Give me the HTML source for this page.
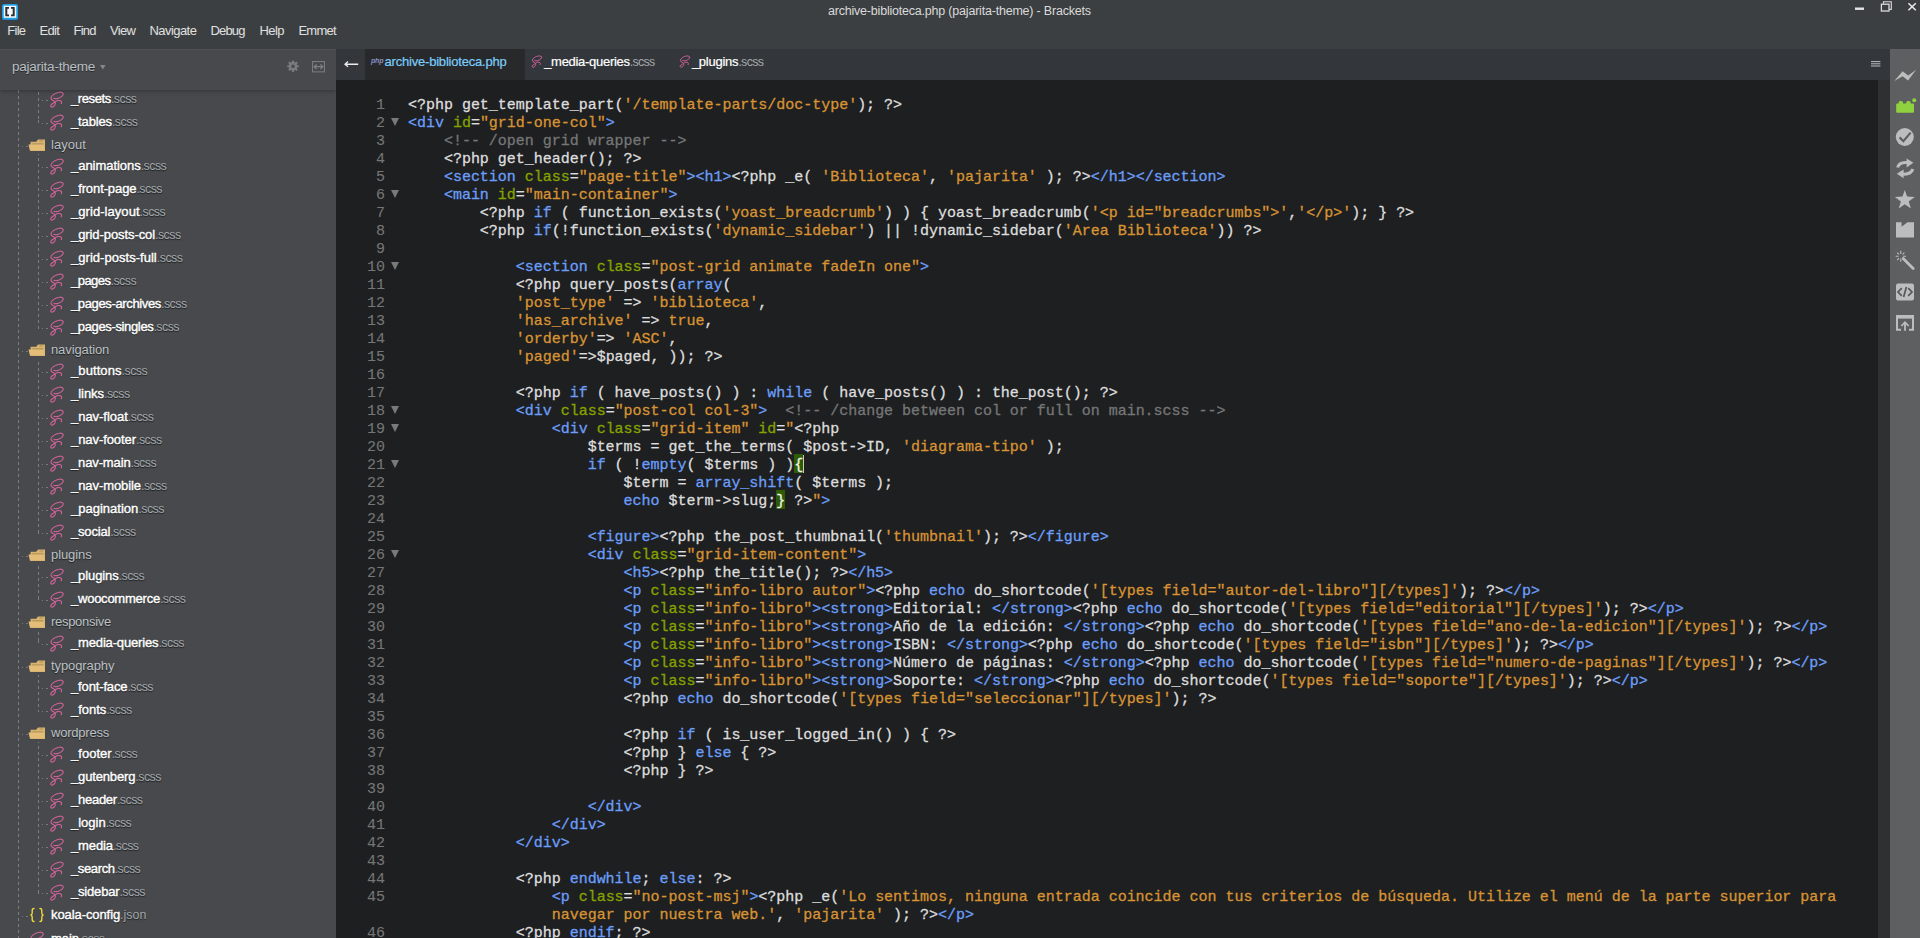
<!DOCTYPE html>
<html><head><meta charset="utf-8"><title>Brackets</title>
<style>
*{margin:0;padding:0;box-sizing:border-box}
html,body{width:1920px;height:938px;overflow:hidden;background:#3c3f41}
body{font-family:"Liberation Sans",sans-serif;position:relative;color:#ddd}
i{font-style:normal}
svg{display:block}
#top{position:absolute;left:0;top:0;width:1920px;height:49px;background:#3c3f41}
.ttl{position:absolute;top:3px;font-size:12.5px;color:#dadada;line-height:16px;white-space:nowrap}
#logo{position:absolute;left:2px;top:4px}
.mi{position:absolute;top:22px;font-size:13px;line-height:18px;color:#e0e0e0;white-space:nowrap}
.wc{position:absolute}
#side{position:absolute;left:0;top:49px;width:336px;height:889px;background:#47494c;overflow:hidden}
#tree{position:absolute;left:0;top:-49px;width:336px;height:938px}
#shead{position:absolute;left:0;top:0;width:336px;height:41px;background:#47494c;z-index:3;box-shadow:inset 0 1px 0 #505255,0 1px 4px rgba(0,0,0,.3)}
.pn{position:absolute;top:9px;font-size:13.5px;line-height:18px;color:#b8bec2;text-shadow:0 1px 0 rgba(0,0,0,.45);white-space:nowrap}
.tx{position:absolute;font-size:13px;line-height:20px;white-space:nowrap;text-shadow:0 1px 1px rgba(0,0,0,.6)}
.fn{color:#fff;-webkit-text-stroke:.4px #fff}.ex{color:#a3a8ac;-webkit-text-stroke:0;font-size:12.4px}.dn{color:#bcc1c5}
.ti{position:absolute;line-height:0}
.hd{position:absolute;width:7px;height:1px;background:linear-gradient(90deg,#76787b 0 1px,transparent 1px 4px,#76787b 4px 6px,transparent 6px)}
.hd2{position:absolute;width:6px;height:1px;background:linear-gradient(90deg,#76787b 0 1px,transparent 1px 4px,#76787b 4px 6px)}
.vd{position:absolute;width:1px;background:repeating-linear-gradient(180deg,#7b7d80 0 3px,transparent 3px 6px)}
#tabs{position:absolute;left:336px;top:49px;width:1554px;height:31px;background:#33373b}
#tabs .act{position:absolute;left:29px;top:0;width:160px;height:31px;background:#28292b}
.tb{position:absolute;top:3.5px;font-size:13px;line-height:18px;white-space:nowrap;color:#fff;-webkit-text-stroke:.2px #fff}
.tb.a{color:#7ccdfa;-webkit-text-stroke:.2px #7ccdfa}
.tic{position:absolute}
#ed{position:absolute;left:336px;top:80px;width:1554px;height:858px;background:#1d1f21;overflow:hidden}
#code{position:absolute;left:-336px;top:-80px;width:1920px;height:938px}
#sbar{position:absolute;left:1878px;top:80px;width:12px;height:858px;background:#2f3030}
#tool{position:absolute;left:1890px;top:49px;width:30px;height:889px;background:#5d5f60}

.ln{position:absolute;z-index:0;left:336px;height:18px;width:1540px;font-family:"Liberation Mono",monospace;font-size:15px;line-height:18px;white-space:pre;color:#ddd;-webkit-text-stroke:.3px}
.no{position:absolute;left:0;width:49px;text-align:right;color:#767676;-webkit-text-stroke:.1px}
.cd{position:absolute;left:72px;letter-spacing:-.019px}
.f{position:absolute;left:55px;top:3px;width:0;height:0;border-left:4px solid transparent;border-right:4px solid transparent;border-top:8px solid #7a7a7a}
.t,.k{color:#6c9ef8}.a{color:#85a300}.s{color:#d89333}.c{color:#767676}.m{color:#f2f2f2;position:relative}.m::before{content:"";position:absolute;left:0;top:-3px;width:9px;height:19px;background:#2e5c00;z-index:-1}.cur{position:absolute;top:-2px;width:1px;height:18px;background:#c8c8c8}
</style></head><body>
<div id="top">
<svg id="logo" width="16" height="16" viewBox="0 0 16 16"><rect x="0" y="0" width="16" height="16" rx="2" fill="#1b8fd2"/><rect x="0.4" y="0.4" width="15.2" height="14.4" rx="1.6" fill="#2ba8e8"/><rect x="1.8" y="1.8" width="12.4" height="12" rx="0.6" fill="#f4f8fb"/><path d="M3.3 3h3.7v1.8H5.3v5.6h1.7v1.8H3.3zM12.7 3H9v1.8h1.7v5.6H9v1.8h3.7z" fill="#2a2e32"/></svg>

<div id="ttl" class="ttl" style="left:828px;letter-spacing:-0.205px">archive-biblioteca.php (pajarita-theme) - Brackets</div>
<div id="m0" class="mi" style="left:7.3px;letter-spacing:-0.738px">File</div>
<div id="m1" class="mi" style="left:39.4px;letter-spacing:-0.652px">Edit</div>
<div id="m2" class="mi" style="left:73.5px;letter-spacing:-0.774px">Find</div>
<div id="m3" class="mi" style="left:109.9px;letter-spacing:-0.638px">View</div>
<div id="m4" class="mi" style="left:149.5px;letter-spacing:-0.564px">Navigate</div>
<div id="m5" class="mi" style="left:210.5px;letter-spacing:-0.842px">Debug</div>
<div id="m6" class="mi" style="left:259.6px;letter-spacing:-0.638px">Help</div>
<div id="m7" class="mi" style="left:298.4px;letter-spacing:-0.714px">Emmet</div>
<svg class="wc" style="left:1850px;top:0" width="70" height="16" viewBox="0 0 70 16"><rect x="5" y="7.5" width="9" height="2.4" fill="#e6e6e6"/><path d="M33.5 3.8v-2h7.8v7.6h-2" fill="none" stroke="#dcdcdc" stroke-width="1.1"/><rect x="31.4" y="4.2" width="7.6" height="6.8" fill="none" stroke="#dcdcdc" stroke-width="1.3"/><path d="M58.4 3.2l7.4 7M65.8 3.2l-7.4 7" stroke="#ececec" stroke-width="1.5" fill="none"/></svg>

</div>
<div id="side">
  <div id="shead"><div id="pn" class="pn" style="left:12px;letter-spacing:-0.235px">pajarita-theme</div><svg style="position:absolute;left:100px;top:16.2px" width="6" height="5" viewBox="0 0 6 5"><path d="M0 0h5.6L2.8 4.4z" fill="#7f898d"/></svg>
<svg style="position:absolute;left:286.5px;top:11.4px" width="12" height="12.5" viewBox="0 0 13 13"><g fill="#787c7f"><circle cx="6.5" cy="6.5" r="4.6"/><rect x="5.3" y="0.2" width="2.4" height="12.6" rx=".5"/><rect x="5.3" y="0.2" width="2.4" height="12.6" rx=".5" transform="rotate(45 6.5 6.5)"/><rect x="5.3" y="0.2" width="2.4" height="12.6" rx=".5" transform="rotate(90 6.5 6.5)"/><rect x="5.3" y="0.2" width="2.4" height="12.6" rx=".5" transform="rotate(135 6.5 6.5)"/></g><circle cx="6.5" cy="6.5" r="1.8" fill="#47494c"/></svg>
<svg style="position:absolute;left:312px;top:12px" width="13" height="12" viewBox="0 0 13 12"><rect x=".55" y=".55" width="11.9" height="10.3" fill="none" stroke="#777b7e" stroke-width="1.1"/><path d="M2.6 5.7h7.8M4.6 3.4L2.2 5.7L4.6 8M8.4 3.4L10.8 5.7L8.4 8" fill="none" stroke="#7d8285" stroke-width="1.3"/></svg>
</div>
  <div id="tree">
<div class="hd" style="left:42px;top:100px"></div>
<div class="ti" style="left:49px;top:90.5px"><svg viewBox="0 0 16 18" width="15.5" height="17"><path d="M14.8 2.7C13.8 0.4 8.6 0.8 4.8 3.6C1.7 5.9 1 7.9 2.9 9.3C4.4 10.4 5.8 10.6 6.3 11.7C7.2 13.6 5.6 16.2 3.6 16.9C2 17.4 1.1 16.2 1.8 15C2.6 13.6 4.8 12.9 6.3 11.5C7.8 10.1 11 9.6 12.4 10.6C13.4 11.4 13.3 12.8 12.6 13.5M14.8 2.7C15.5 4.3 12.8 6.7 9.8 7.7C7.8 8.4 5.9 8.3 5 7.7" fill="none" stroke="#d0639b" stroke-width="1.15" stroke-linecap="round" stroke-linejoin="round"/></svg></div>
<div class="tx fn" style="left:71px;top:89px"><span id="t0n" style="letter-spacing:-0.392px">_resets</span><span id="t0e" class="ex" style="letter-spacing:-0.527px">.scss</span></div>
<div class="hd" style="left:42px;top:123px"></div>
<div class="ti" style="left:49px;top:113.5px"><svg viewBox="0 0 16 18" width="15.5" height="17"><path d="M14.8 2.7C13.8 0.4 8.6 0.8 4.8 3.6C1.7 5.9 1 7.9 2.9 9.3C4.4 10.4 5.8 10.6 6.3 11.7C7.2 13.6 5.6 16.2 3.6 16.9C2 17.4 1.1 16.2 1.8 15C2.6 13.6 4.8 12.9 6.3 11.5C7.8 10.1 11 9.6 12.4 10.6C13.4 11.4 13.3 12.8 12.6 13.5M14.8 2.7C15.5 4.3 12.8 6.7 9.8 7.7C7.8 8.4 5.9 8.3 5 7.7" fill="none" stroke="#d0639b" stroke-width="1.15" stroke-linecap="round" stroke-linejoin="round"/></svg></div>
<div class="tx fn" style="left:71px;top:112px"><span id="t1n" style="letter-spacing:-0.146px">_tables</span><span id="t1e" class="ex" style="letter-spacing:-0.527px">.scss</span></div>
<div class="hd2" style="left:22px;top:146px"></div>
<div class="ti" style="left:28px;top:138.5px"><svg viewBox="0 0 18 14" width="18" height="14"><path d="M2.6 2.8h5.6l1.8-2.4h7v11.4H2.6z" fill="#d9b46f"/><path d="M11.4 1.5h3.8v0.9h-3.8z" fill="#a98c58"/><path d="M4.2 4.6h11.2v0.9H4.2z" fill="#90794b"/><path d="M0.5 5.5h15l1.5 6.3H2z" fill="#e4be78"/></svg></div>
<div id="t2" class="tx dn" style="left:51px;top:135px;letter-spacing:0.049px">layout</div>
<div class="hd" style="left:42px;top:167px"></div>
<div class="ti" style="left:49px;top:157.5px"><svg viewBox="0 0 16 18" width="15.5" height="17"><path d="M14.8 2.7C13.8 0.4 8.6 0.8 4.8 3.6C1.7 5.9 1 7.9 2.9 9.3C4.4 10.4 5.8 10.6 6.3 11.7C7.2 13.6 5.6 16.2 3.6 16.9C2 17.4 1.1 16.2 1.8 15C2.6 13.6 4.8 12.9 6.3 11.5C7.8 10.1 11 9.6 12.4 10.6C13.4 11.4 13.3 12.8 12.6 13.5M14.8 2.7C15.5 4.3 12.8 6.7 9.8 7.7C7.8 8.4 5.9 8.3 5 7.7" fill="none" stroke="#d0639b" stroke-width="1.15" stroke-linecap="round" stroke-linejoin="round"/></svg></div>
<div class="tx fn" style="left:71px;top:156px"><span id="t3n" style="letter-spacing:-0.042px">_animations</span><span id="t3e" class="ex" style="letter-spacing:-0.527px">.scss</span></div>
<div class="hd" style="left:42px;top:190px"></div>
<div class="ti" style="left:49px;top:180.5px"><svg viewBox="0 0 16 18" width="15.5" height="17"><path d="M14.8 2.7C13.8 0.4 8.6 0.8 4.8 3.6C1.7 5.9 1 7.9 2.9 9.3C4.4 10.4 5.8 10.6 6.3 11.7C7.2 13.6 5.6 16.2 3.6 16.9C2 17.4 1.1 16.2 1.8 15C2.6 13.6 4.8 12.9 6.3 11.5C7.8 10.1 11 9.6 12.4 10.6C13.4 11.4 13.3 12.8 12.6 13.5M14.8 2.7C15.5 4.3 12.8 6.7 9.8 7.7C7.8 8.4 5.9 8.3 5 7.7" fill="none" stroke="#d0639b" stroke-width="1.15" stroke-linecap="round" stroke-linejoin="round"/></svg></div>
<div class="tx fn" style="left:71px;top:179px"><span id="t4n" style="letter-spacing:-0.100px">_front-page</span><span id="t4e" class="ex" style="letter-spacing:-0.527px">.scss</span></div>
<div class="hd" style="left:42px;top:213px"></div>
<div class="ti" style="left:49px;top:203.5px"><svg viewBox="0 0 16 18" width="15.5" height="17"><path d="M14.8 2.7C13.8 0.4 8.6 0.8 4.8 3.6C1.7 5.9 1 7.9 2.9 9.3C4.4 10.4 5.8 10.6 6.3 11.7C7.2 13.6 5.6 16.2 3.6 16.9C2 17.4 1.1 16.2 1.8 15C2.6 13.6 4.8 12.9 6.3 11.5C7.8 10.1 11 9.6 12.4 10.6C13.4 11.4 13.3 12.8 12.6 13.5M14.8 2.7C15.5 4.3 12.8 6.7 9.8 7.7C7.8 8.4 5.9 8.3 5 7.7" fill="none" stroke="#d0639b" stroke-width="1.15" stroke-linecap="round" stroke-linejoin="round"/></svg></div>
<div class="tx fn" style="left:71px;top:202px"><span id="t5n" style="letter-spacing:0.055px">_grid-layout</span><span id="t5e" class="ex" style="letter-spacing:-0.527px">.scss</span></div>
<div class="hd" style="left:42px;top:236px"></div>
<div class="ti" style="left:49px;top:226.5px"><svg viewBox="0 0 16 18" width="15.5" height="17"><path d="M14.8 2.7C13.8 0.4 8.6 0.8 4.8 3.6C1.7 5.9 1 7.9 2.9 9.3C4.4 10.4 5.8 10.6 6.3 11.7C7.2 13.6 5.6 16.2 3.6 16.9C2 17.4 1.1 16.2 1.8 15C2.6 13.6 4.8 12.9 6.3 11.5C7.8 10.1 11 9.6 12.4 10.6C13.4 11.4 13.3 12.8 12.6 13.5M14.8 2.7C15.5 4.3 12.8 6.7 9.8 7.7C7.8 8.4 5.9 8.3 5 7.7" fill="none" stroke="#d0639b" stroke-width="1.15" stroke-linecap="round" stroke-linejoin="round"/></svg></div>
<div class="tx fn" style="left:71px;top:225px"><span id="t6n" style="letter-spacing:-0.084px">_grid-posts-col</span><span id="t6e" class="ex" style="letter-spacing:-0.527px">.scss</span></div>
<div class="hd" style="left:42px;top:259px"></div>
<div class="ti" style="left:49px;top:249.5px"><svg viewBox="0 0 16 18" width="15.5" height="17"><path d="M14.8 2.7C13.8 0.4 8.6 0.8 4.8 3.6C1.7 5.9 1 7.9 2.9 9.3C4.4 10.4 5.8 10.6 6.3 11.7C7.2 13.6 5.6 16.2 3.6 16.9C2 17.4 1.1 16.2 1.8 15C2.6 13.6 4.8 12.9 6.3 11.5C7.8 10.1 11 9.6 12.4 10.6C13.4 11.4 13.3 12.8 12.6 13.5M14.8 2.7C15.5 4.3 12.8 6.7 9.8 7.7C7.8 8.4 5.9 8.3 5 7.7" fill="none" stroke="#d0639b" stroke-width="1.15" stroke-linecap="round" stroke-linejoin="round"/></svg></div>
<div class="tx fn" style="left:71px;top:248px"><span id="t7n" style="letter-spacing:0.033px">_grid-posts-full</span><span id="t7e" class="ex" style="letter-spacing:-0.527px">.scss</span></div>
<div class="hd" style="left:42px;top:282px"></div>
<div class="ti" style="left:49px;top:272.5px"><svg viewBox="0 0 16 18" width="15.5" height="17"><path d="M14.8 2.7C13.8 0.4 8.6 0.8 4.8 3.6C1.7 5.9 1 7.9 2.9 9.3C4.4 10.4 5.8 10.6 6.3 11.7C7.2 13.6 5.6 16.2 3.6 16.9C2 17.4 1.1 16.2 1.8 15C2.6 13.6 4.8 12.9 6.3 11.5C7.8 10.1 11 9.6 12.4 10.6C13.4 11.4 13.3 12.8 12.6 13.5M14.8 2.7C15.5 4.3 12.8 6.7 9.8 7.7C7.8 8.4 5.9 8.3 5 7.7" fill="none" stroke="#d0639b" stroke-width="1.15" stroke-linecap="round" stroke-linejoin="round"/></svg></div>
<div class="tx fn" style="left:71px;top:271px"><span id="t8n" style="letter-spacing:-0.526px">_pages</span><span id="t8e" class="ex" style="letter-spacing:-0.527px">.scss</span></div>
<div class="hd" style="left:42px;top:305px"></div>
<div class="ti" style="left:49px;top:295.5px"><svg viewBox="0 0 16 18" width="15.5" height="17"><path d="M14.8 2.7C13.8 0.4 8.6 0.8 4.8 3.6C1.7 5.9 1 7.9 2.9 9.3C4.4 10.4 5.8 10.6 6.3 11.7C7.2 13.6 5.6 16.2 3.6 16.9C2 17.4 1.1 16.2 1.8 15C2.6 13.6 4.8 12.9 6.3 11.5C7.8 10.1 11 9.6 12.4 10.6C13.4 11.4 13.3 12.8 12.6 13.5M14.8 2.7C15.5 4.3 12.8 6.7 9.8 7.7C7.8 8.4 5.9 8.3 5 7.7" fill="none" stroke="#d0639b" stroke-width="1.15" stroke-linecap="round" stroke-linejoin="round"/></svg></div>
<div class="tx fn" style="left:71px;top:294px"><span id="t9n" style="letter-spacing:-0.359px">_pages-archives</span><span id="t9e" class="ex" style="letter-spacing:-0.527px">.scss</span></div>
<div class="hd" style="left:42px;top:328px"></div>
<div class="ti" style="left:49px;top:318.5px"><svg viewBox="0 0 16 18" width="15.5" height="17"><path d="M14.8 2.7C13.8 0.4 8.6 0.8 4.8 3.6C1.7 5.9 1 7.9 2.9 9.3C4.4 10.4 5.8 10.6 6.3 11.7C7.2 13.6 5.6 16.2 3.6 16.9C2 17.4 1.1 16.2 1.8 15C2.6 13.6 4.8 12.9 6.3 11.5C7.8 10.1 11 9.6 12.4 10.6C13.4 11.4 13.3 12.8 12.6 13.5M14.8 2.7C15.5 4.3 12.8 6.7 9.8 7.7C7.8 8.4 5.9 8.3 5 7.7" fill="none" stroke="#d0639b" stroke-width="1.15" stroke-linecap="round" stroke-linejoin="round"/></svg></div>
<div class="tx fn" style="left:71px;top:317px"><span id="t10n" style="letter-spacing:-0.361px">_pages-singles</span><span id="t10e" class="ex" style="letter-spacing:-0.527px">.scss</span></div>
<div class="hd2" style="left:22px;top:351px"></div>
<div class="ti" style="left:28px;top:343.5px"><svg viewBox="0 0 18 14" width="18" height="14"><path d="M2.6 2.8h5.6l1.8-2.4h7v11.4H2.6z" fill="#d9b46f"/><path d="M11.4 1.5h3.8v0.9h-3.8z" fill="#a98c58"/><path d="M4.2 4.6h11.2v0.9H4.2z" fill="#90794b"/><path d="M0.5 5.5h15l1.5 6.3H2z" fill="#e4be78"/></svg></div>
<div id="t11" class="tx dn" style="left:51px;top:340px;letter-spacing:-0.108px">navigation</div>
<div class="hd" style="left:42px;top:372px"></div>
<div class="ti" style="left:49px;top:362.5px"><svg viewBox="0 0 16 18" width="15.5" height="17"><path d="M14.8 2.7C13.8 0.4 8.6 0.8 4.8 3.6C1.7 5.9 1 7.9 2.9 9.3C4.4 10.4 5.8 10.6 6.3 11.7C7.2 13.6 5.6 16.2 3.6 16.9C2 17.4 1.1 16.2 1.8 15C2.6 13.6 4.8 12.9 6.3 11.5C7.8 10.1 11 9.6 12.4 10.6C13.4 11.4 13.3 12.8 12.6 13.5M14.8 2.7C15.5 4.3 12.8 6.7 9.8 7.7C7.8 8.4 5.9 8.3 5 7.7" fill="none" stroke="#d0639b" stroke-width="1.15" stroke-linecap="round" stroke-linejoin="round"/></svg></div>
<div class="tx fn" style="left:71px;top:361px"><span id="t12n" style="letter-spacing:0.091px">_buttons</span><span id="t12e" class="ex" style="letter-spacing:-0.527px">.scss</span></div>
<div class="hd" style="left:42px;top:395px"></div>
<div class="ti" style="left:49px;top:385.5px"><svg viewBox="0 0 16 18" width="15.5" height="17"><path d="M14.8 2.7C13.8 0.4 8.6 0.8 4.8 3.6C1.7 5.9 1 7.9 2.9 9.3C4.4 10.4 5.8 10.6 6.3 11.7C7.2 13.6 5.6 16.2 3.6 16.9C2 17.4 1.1 16.2 1.8 15C2.6 13.6 4.8 12.9 6.3 11.5C7.8 10.1 11 9.6 12.4 10.6C13.4 11.4 13.3 12.8 12.6 13.5M14.8 2.7C15.5 4.3 12.8 6.7 9.8 7.7C7.8 8.4 5.9 8.3 5 7.7" fill="none" stroke="#d0639b" stroke-width="1.15" stroke-linecap="round" stroke-linejoin="round"/></svg></div>
<div class="tx fn" style="left:71px;top:384px"><span id="t13n" style="letter-spacing:-0.042px">_links</span><span id="t13e" class="ex" style="letter-spacing:-0.527px">.scss</span></div>
<div class="hd" style="left:42px;top:418px"></div>
<div class="ti" style="left:49px;top:408.5px"><svg viewBox="0 0 16 18" width="15.5" height="17"><path d="M14.8 2.7C13.8 0.4 8.6 0.8 4.8 3.6C1.7 5.9 1 7.9 2.9 9.3C4.4 10.4 5.8 10.6 6.3 11.7C7.2 13.6 5.6 16.2 3.6 16.9C2 17.4 1.1 16.2 1.8 15C2.6 13.6 4.8 12.9 6.3 11.5C7.8 10.1 11 9.6 12.4 10.6C13.4 11.4 13.3 12.8 12.6 13.5M14.8 2.7C15.5 4.3 12.8 6.7 9.8 7.7C7.8 8.4 5.9 8.3 5 7.7" fill="none" stroke="#d0639b" stroke-width="1.15" stroke-linecap="round" stroke-linejoin="round"/></svg></div>
<div class="tx fn" style="left:71px;top:407px"><span id="t14n" style="letter-spacing:-0.029px">_nav-float</span><span id="t14e" class="ex" style="letter-spacing:-0.527px">.scss</span></div>
<div class="hd" style="left:42px;top:441px"></div>
<div class="ti" style="left:49px;top:431.5px"><svg viewBox="0 0 16 18" width="15.5" height="17"><path d="M14.8 2.7C13.8 0.4 8.6 0.8 4.8 3.6C1.7 5.9 1 7.9 2.9 9.3C4.4 10.4 5.8 10.6 6.3 11.7C7.2 13.6 5.6 16.2 3.6 16.9C2 17.4 1.1 16.2 1.8 15C2.6 13.6 4.8 12.9 6.3 11.5C7.8 10.1 11 9.6 12.4 10.6C13.4 11.4 13.3 12.8 12.6 13.5M14.8 2.7C15.5 4.3 12.8 6.7 9.8 7.7C7.8 8.4 5.9 8.3 5 7.7" fill="none" stroke="#d0639b" stroke-width="1.15" stroke-linecap="round" stroke-linejoin="round"/></svg></div>
<div class="tx fn" style="left:71px;top:430px"><span id="t15n" style="letter-spacing:-0.070px">_nav-footer</span><span id="t15e" class="ex" style="letter-spacing:-0.527px">.scss</span></div>
<div class="hd" style="left:42px;top:464px"></div>
<div class="ti" style="left:49px;top:454.5px"><svg viewBox="0 0 16 18" width="15.5" height="17"><path d="M14.8 2.7C13.8 0.4 8.6 0.8 4.8 3.6C1.7 5.9 1 7.9 2.9 9.3C4.4 10.4 5.8 10.6 6.3 11.7C7.2 13.6 5.6 16.2 3.6 16.9C2 17.4 1.1 16.2 1.8 15C2.6 13.6 4.8 12.9 6.3 11.5C7.8 10.1 11 9.6 12.4 10.6C13.4 11.4 13.3 12.8 12.6 13.5M14.8 2.7C15.5 4.3 12.8 6.7 9.8 7.7C7.8 8.4 5.9 8.3 5 7.7" fill="none" stroke="#d0639b" stroke-width="1.15" stroke-linecap="round" stroke-linejoin="round"/></svg></div>
<div class="tx fn" style="left:71px;top:453px"><span id="t16n" style="letter-spacing:-0.134px">_nav-main</span><span id="t16e" class="ex" style="letter-spacing:-0.527px">.scss</span></div>
<div class="hd" style="left:42px;top:487px"></div>
<div class="ti" style="left:49px;top:477.5px"><svg viewBox="0 0 16 18" width="15.5" height="17"><path d="M14.8 2.7C13.8 0.4 8.6 0.8 4.8 3.6C1.7 5.9 1 7.9 2.9 9.3C4.4 10.4 5.8 10.6 6.3 11.7C7.2 13.6 5.6 16.2 3.6 16.9C2 17.4 1.1 16.2 1.8 15C2.6 13.6 4.8 12.9 6.3 11.5C7.8 10.1 11 9.6 12.4 10.6C13.4 11.4 13.3 12.8 12.6 13.5M14.8 2.7C15.5 4.3 12.8 6.7 9.8 7.7C7.8 8.4 5.9 8.3 5 7.7" fill="none" stroke="#d0639b" stroke-width="1.15" stroke-linecap="round" stroke-linejoin="round"/></svg></div>
<div class="tx fn" style="left:71px;top:476px"><span id="t17n" style="letter-spacing:-0.075px">_nav-mobile</span><span id="t17e" class="ex" style="letter-spacing:-0.527px">.scss</span></div>
<div class="hd" style="left:42px;top:510px"></div>
<div class="ti" style="left:49px;top:500.5px"><svg viewBox="0 0 16 18" width="15.5" height="17"><path d="M14.8 2.7C13.8 0.4 8.6 0.8 4.8 3.6C1.7 5.9 1 7.9 2.9 9.3C4.4 10.4 5.8 10.6 6.3 11.7C7.2 13.6 5.6 16.2 3.6 16.9C2 17.4 1.1 16.2 1.8 15C2.6 13.6 4.8 12.9 6.3 11.5C7.8 10.1 11 9.6 12.4 10.6C13.4 11.4 13.3 12.8 12.6 13.5M14.8 2.7C15.5 4.3 12.8 6.7 9.8 7.7C7.8 8.4 5.9 8.3 5 7.7" fill="none" stroke="#d0639b" stroke-width="1.15" stroke-linecap="round" stroke-linejoin="round"/></svg></div>
<div class="tx fn" style="left:71px;top:499px"><span id="t18n" style="letter-spacing:0.006px">_pagination</span><span id="t18e" class="ex" style="letter-spacing:-0.527px">.scss</span></div>
<div class="hd" style="left:42px;top:533px"></div>
<div class="ti" style="left:49px;top:523.5px"><svg viewBox="0 0 16 18" width="15.5" height="17"><path d="M14.8 2.7C13.8 0.4 8.6 0.8 4.8 3.6C1.7 5.9 1 7.9 2.9 9.3C4.4 10.4 5.8 10.6 6.3 11.7C7.2 13.6 5.6 16.2 3.6 16.9C2 17.4 1.1 16.2 1.8 15C2.6 13.6 4.8 12.9 6.3 11.5C7.8 10.1 11 9.6 12.4 10.6C13.4 11.4 13.3 12.8 12.6 13.5M14.8 2.7C15.5 4.3 12.8 6.7 9.8 7.7C7.8 8.4 5.9 8.3 5 7.7" fill="none" stroke="#d0639b" stroke-width="1.15" stroke-linecap="round" stroke-linejoin="round"/></svg></div>
<div class="tx fn" style="left:71px;top:522px"><span id="t19n" style="letter-spacing:-0.181px">_social</span><span id="t19e" class="ex" style="letter-spacing:-0.527px">.scss</span></div>
<div class="hd2" style="left:22px;top:556px"></div>
<div class="ti" style="left:28px;top:548.5px"><svg viewBox="0 0 18 14" width="18" height="14"><path d="M2.6 2.8h5.6l1.8-2.4h7v11.4H2.6z" fill="#d9b46f"/><path d="M11.4 1.5h3.8v0.9h-3.8z" fill="#a98c58"/><path d="M4.2 4.6h11.2v0.9H4.2z" fill="#90794b"/><path d="M0.5 5.5h15l1.5 6.3H2z" fill="#e4be78"/></svg></div>
<div id="t20" class="tx dn" style="left:51px;top:545px;letter-spacing:-0.086px">plugins</div>
<div class="hd" style="left:42px;top:577px"></div>
<div class="ti" style="left:49px;top:567.5px"><svg viewBox="0 0 16 18" width="15.5" height="17"><path d="M14.8 2.7C13.8 0.4 8.6 0.8 4.8 3.6C1.7 5.9 1 7.9 2.9 9.3C4.4 10.4 5.8 10.6 6.3 11.7C7.2 13.6 5.6 16.2 3.6 16.9C2 17.4 1.1 16.2 1.8 15C2.6 13.6 4.8 12.9 6.3 11.5C7.8 10.1 11 9.6 12.4 10.6C13.4 11.4 13.3 12.8 12.6 13.5M14.8 2.7C15.5 4.3 12.8 6.7 9.8 7.7C7.8 8.4 5.9 8.3 5 7.7" fill="none" stroke="#d0639b" stroke-width="1.15" stroke-linecap="round" stroke-linejoin="round"/></svg></div>
<div class="tx fn" style="left:71px;top:566px"><span id="t21n" style="letter-spacing:-0.105px">_plugins</span><span id="t21e" class="ex" style="letter-spacing:-0.527px">.scss</span></div>
<div class="hd" style="left:42px;top:600px"></div>
<div class="ti" style="left:49px;top:590.5px"><svg viewBox="0 0 16 18" width="15.5" height="17"><path d="M14.8 2.7C13.8 0.4 8.6 0.8 4.8 3.6C1.7 5.9 1 7.9 2.9 9.3C4.4 10.4 5.8 10.6 6.3 11.7C7.2 13.6 5.6 16.2 3.6 16.9C2 17.4 1.1 16.2 1.8 15C2.6 13.6 4.8 12.9 6.3 11.5C7.8 10.1 11 9.6 12.4 10.6C13.4 11.4 13.3 12.8 12.6 13.5M14.8 2.7C15.5 4.3 12.8 6.7 9.8 7.7C7.8 8.4 5.9 8.3 5 7.7" fill="none" stroke="#d0639b" stroke-width="1.15" stroke-linecap="round" stroke-linejoin="round"/></svg></div>
<div class="tx fn" style="left:71px;top:589px"><span id="t22n" style="letter-spacing:-0.239px">_woocommerce</span><span id="t22e" class="ex" style="letter-spacing:-0.527px">.scss</span></div>
<div class="hd2" style="left:22px;top:623px"></div>
<div class="ti" style="left:28px;top:615.5px"><svg viewBox="0 0 18 14" width="18" height="14"><path d="M2.6 2.8h5.6l1.8-2.4h7v11.4H2.6z" fill="#d9b46f"/><path d="M11.4 1.5h3.8v0.9h-3.8z" fill="#a98c58"/><path d="M4.2 4.6h11.2v0.9H4.2z" fill="#90794b"/><path d="M0.5 5.5h15l1.5 6.3H2z" fill="#e4be78"/></svg></div>
<div id="t23" class="tx dn" style="left:51px;top:612px;letter-spacing:-0.298px">responsive</div>
<div class="hd" style="left:42px;top:644px"></div>
<div class="ti" style="left:49px;top:634.5px"><svg viewBox="0 0 16 18" width="15.5" height="17"><path d="M14.8 2.7C13.8 0.4 8.6 0.8 4.8 3.6C1.7 5.9 1 7.9 2.9 9.3C4.4 10.4 5.8 10.6 6.3 11.7C7.2 13.6 5.6 16.2 3.6 16.9C2 17.4 1.1 16.2 1.8 15C2.6 13.6 4.8 12.9 6.3 11.5C7.8 10.1 11 9.6 12.4 10.6C13.4 11.4 13.3 12.8 12.6 13.5M14.8 2.7C15.5 4.3 12.8 6.7 9.8 7.7C7.8 8.4 5.9 8.3 5 7.7" fill="none" stroke="#d0639b" stroke-width="1.15" stroke-linecap="round" stroke-linejoin="round"/></svg></div>
<div class="tx fn" style="left:71px;top:633px"><span id="t24n" style="letter-spacing:-0.158px">_media-queries</span><span id="t24e" class="ex" style="letter-spacing:-0.527px">.scss</span></div>
<div class="hd2" style="left:22px;top:667px"></div>
<div class="ti" style="left:28px;top:659.5px"><svg viewBox="0 0 18 14" width="18" height="14"><path d="M2.6 2.8h5.6l1.8-2.4h7v11.4H2.6z" fill="#d9b46f"/><path d="M11.4 1.5h3.8v0.9h-3.8z" fill="#a98c58"/><path d="M4.2 4.6h11.2v0.9H4.2z" fill="#90794b"/><path d="M0.5 5.5h15l1.5 6.3H2z" fill="#e4be78"/></svg></div>
<div id="t25" class="tx dn" style="left:51px;top:656px;letter-spacing:-0.103px">typography</div>
<div class="hd" style="left:42px;top:688px"></div>
<div class="ti" style="left:49px;top:678.5px"><svg viewBox="0 0 16 18" width="15.5" height="17"><path d="M14.8 2.7C13.8 0.4 8.6 0.8 4.8 3.6C1.7 5.9 1 7.9 2.9 9.3C4.4 10.4 5.8 10.6 6.3 11.7C7.2 13.6 5.6 16.2 3.6 16.9C2 17.4 1.1 16.2 1.8 15C2.6 13.6 4.8 12.9 6.3 11.5C7.8 10.1 11 9.6 12.4 10.6C13.4 11.4 13.3 12.8 12.6 13.5M14.8 2.7C15.5 4.3 12.8 6.7 9.8 7.7C7.8 8.4 5.9 8.3 5 7.7" fill="none" stroke="#d0639b" stroke-width="1.15" stroke-linecap="round" stroke-linejoin="round"/></svg></div>
<div class="tx fn" style="left:71px;top:677px"><span id="t26n" style="letter-spacing:-0.143px">_font-face</span><span id="t26e" class="ex" style="letter-spacing:-0.527px">.scss</span></div>
<div class="hd" style="left:42px;top:711px"></div>
<div class="ti" style="left:49px;top:701.5px"><svg viewBox="0 0 16 18" width="15.5" height="17"><path d="M14.8 2.7C13.8 0.4 8.6 0.8 4.8 3.6C1.7 5.9 1 7.9 2.9 9.3C4.4 10.4 5.8 10.6 6.3 11.7C7.2 13.6 5.6 16.2 3.6 16.9C2 17.4 1.1 16.2 1.8 15C2.6 13.6 4.8 12.9 6.3 11.5C7.8 10.1 11 9.6 12.4 10.6C13.4 11.4 13.3 12.8 12.6 13.5M14.8 2.7C15.5 4.3 12.8 6.7 9.8 7.7C7.8 8.4 5.9 8.3 5 7.7" fill="none" stroke="#d0639b" stroke-width="1.15" stroke-linecap="round" stroke-linejoin="round"/></svg></div>
<div class="tx fn" style="left:71px;top:700px"><span id="t27n" style="letter-spacing:-0.037px">_fonts</span><span id="t27e" class="ex" style="letter-spacing:-0.527px">.scss</span></div>
<div class="hd2" style="left:22px;top:734px"></div>
<div class="ti" style="left:28px;top:726.5px"><svg viewBox="0 0 18 14" width="18" height="14"><path d="M2.6 2.8h5.6l1.8-2.4h7v11.4H2.6z" fill="#d9b46f"/><path d="M11.4 1.5h3.8v0.9h-3.8z" fill="#a98c58"/><path d="M4.2 4.6h11.2v0.9H4.2z" fill="#90794b"/><path d="M0.5 5.5h15l1.5 6.3H2z" fill="#e4be78"/></svg></div>
<div id="t28" class="tx dn" style="left:51px;top:723px;letter-spacing:-0.219px">wordpress</div>
<div class="hd" style="left:42px;top:755px"></div>
<div class="ti" style="left:49px;top:745.5px"><svg viewBox="0 0 16 18" width="15.5" height="17"><path d="M14.8 2.7C13.8 0.4 8.6 0.8 4.8 3.6C1.7 5.9 1 7.9 2.9 9.3C4.4 10.4 5.8 10.6 6.3 11.7C7.2 13.6 5.6 16.2 3.6 16.9C2 17.4 1.1 16.2 1.8 15C2.6 13.6 4.8 12.9 6.3 11.5C7.8 10.1 11 9.6 12.4 10.6C13.4 11.4 13.3 12.8 12.6 13.5M14.8 2.7C15.5 4.3 12.8 6.7 9.8 7.7C7.8 8.4 5.9 8.3 5 7.7" fill="none" stroke="#d0639b" stroke-width="1.15" stroke-linecap="round" stroke-linejoin="round"/></svg></div>
<div class="tx fn" style="left:71px;top:744px"><span id="t29n" style="letter-spacing:0.024px">_footer</span><span id="t29e" class="ex" style="letter-spacing:-0.527px">.scss</span></div>
<div class="hd" style="left:42px;top:778px"></div>
<div class="ti" style="left:49px;top:768.5px"><svg viewBox="0 0 16 18" width="15.5" height="17"><path d="M14.8 2.7C13.8 0.4 8.6 0.8 4.8 3.6C1.7 5.9 1 7.9 2.9 9.3C4.4 10.4 5.8 10.6 6.3 11.7C7.2 13.6 5.6 16.2 3.6 16.9C2 17.4 1.1 16.2 1.8 15C2.6 13.6 4.8 12.9 6.3 11.5C7.8 10.1 11 9.6 12.4 10.6C13.4 11.4 13.3 12.8 12.6 13.5M14.8 2.7C15.5 4.3 12.8 6.7 9.8 7.7C7.8 8.4 5.9 8.3 5 7.7" fill="none" stroke="#d0639b" stroke-width="1.15" stroke-linecap="round" stroke-linejoin="round"/></svg></div>
<div class="tx fn" style="left:71px;top:767px"><span id="t30n" style="letter-spacing:-0.148px">_gutenberg</span><span id="t30e" class="ex" style="letter-spacing:-0.527px">.scss</span></div>
<div class="hd" style="left:42px;top:801px"></div>
<div class="ti" style="left:49px;top:791.5px"><svg viewBox="0 0 16 18" width="15.5" height="17"><path d="M14.8 2.7C13.8 0.4 8.6 0.8 4.8 3.6C1.7 5.9 1 7.9 2.9 9.3C4.4 10.4 5.8 10.6 6.3 11.7C7.2 13.6 5.6 16.2 3.6 16.9C2 17.4 1.1 16.2 1.8 15C2.6 13.6 4.8 12.9 6.3 11.5C7.8 10.1 11 9.6 12.4 10.6C13.4 11.4 13.3 12.8 12.6 13.5M14.8 2.7C15.5 4.3 12.8 6.7 9.8 7.7C7.8 8.4 5.9 8.3 5 7.7" fill="none" stroke="#d0639b" stroke-width="1.15" stroke-linecap="round" stroke-linejoin="round"/></svg></div>
<div class="tx fn" style="left:71px;top:790px"><span id="t31n" style="letter-spacing:-0.260px">_header</span><span id="t31e" class="ex" style="letter-spacing:-0.527px">.scss</span></div>
<div class="hd" style="left:42px;top:824px"></div>
<div class="ti" style="left:49px;top:814.5px"><svg viewBox="0 0 16 18" width="15.5" height="17"><path d="M14.8 2.7C13.8 0.4 8.6 0.8 4.8 3.6C1.7 5.9 1 7.9 2.9 9.3C4.4 10.4 5.8 10.6 6.3 11.7C7.2 13.6 5.6 16.2 3.6 16.9C2 17.4 1.1 16.2 1.8 15C2.6 13.6 4.8 12.9 6.3 11.5C7.8 10.1 11 9.6 12.4 10.6C13.4 11.4 13.3 12.8 12.6 13.5M14.8 2.7C15.5 4.3 12.8 6.7 9.8 7.7C7.8 8.4 5.9 8.3 5 7.7" fill="none" stroke="#d0639b" stroke-width="1.15" stroke-linecap="round" stroke-linejoin="round"/></svg></div>
<div class="tx fn" style="left:71px;top:813px"><span id="t32n" style="letter-spacing:-0.001px">_login</span><span id="t32e" class="ex" style="letter-spacing:-0.527px">.scss</span></div>
<div class="hd" style="left:42px;top:847px"></div>
<div class="ti" style="left:49px;top:837.5px"><svg viewBox="0 0 16 18" width="15.5" height="17"><path d="M14.8 2.7C13.8 0.4 8.6 0.8 4.8 3.6C1.7 5.9 1 7.9 2.9 9.3C4.4 10.4 5.8 10.6 6.3 11.7C7.2 13.6 5.6 16.2 3.6 16.9C2 17.4 1.1 16.2 1.8 15C2.6 13.6 4.8 12.9 6.3 11.5C7.8 10.1 11 9.6 12.4 10.6C13.4 11.4 13.3 12.8 12.6 13.5M14.8 2.7C15.5 4.3 12.8 6.7 9.8 7.7C7.8 8.4 5.9 8.3 5 7.7" fill="none" stroke="#d0639b" stroke-width="1.15" stroke-linecap="round" stroke-linejoin="round"/></svg></div>
<div class="tx fn" style="left:71px;top:836px"><span id="t33n" style="letter-spacing:-0.123px">_media</span><span id="t33e" class="ex" style="letter-spacing:-0.527px">.scss</span></div>
<div class="hd" style="left:42px;top:870px"></div>
<div class="ti" style="left:49px;top:860.5px"><svg viewBox="0 0 16 18" width="15.5" height="17"><path d="M14.8 2.7C13.8 0.4 8.6 0.8 4.8 3.6C1.7 5.9 1 7.9 2.9 9.3C4.4 10.4 5.8 10.6 6.3 11.7C7.2 13.6 5.6 16.2 3.6 16.9C2 17.4 1.1 16.2 1.8 15C2.6 13.6 4.8 12.9 6.3 11.5C7.8 10.1 11 9.6 12.4 10.6C13.4 11.4 13.3 12.8 12.6 13.5M14.8 2.7C15.5 4.3 12.8 6.7 9.8 7.7C7.8 8.4 5.9 8.3 5 7.7" fill="none" stroke="#d0639b" stroke-width="1.15" stroke-linecap="round" stroke-linejoin="round"/></svg></div>
<div class="tx fn" style="left:71px;top:859px"><span id="t34n" style="letter-spacing:-0.364px">_search</span><span id="t34e" class="ex" style="letter-spacing:-0.527px">.scss</span></div>
<div class="hd" style="left:42px;top:893px"></div>
<div class="ti" style="left:49px;top:883.5px"><svg viewBox="0 0 16 18" width="15.5" height="17"><path d="M14.8 2.7C13.8 0.4 8.6 0.8 4.8 3.6C1.7 5.9 1 7.9 2.9 9.3C4.4 10.4 5.8 10.6 6.3 11.7C7.2 13.6 5.6 16.2 3.6 16.9C2 17.4 1.1 16.2 1.8 15C2.6 13.6 4.8 12.9 6.3 11.5C7.8 10.1 11 9.6 12.4 10.6C13.4 11.4 13.3 12.8 12.6 13.5M14.8 2.7C15.5 4.3 12.8 6.7 9.8 7.7C7.8 8.4 5.9 8.3 5 7.7" fill="none" stroke="#d0639b" stroke-width="1.15" stroke-linecap="round" stroke-linejoin="round"/></svg></div>
<div class="tx fn" style="left:71px;top:882px"><span id="t35n" style="letter-spacing:-0.184px">_sidebar</span><span id="t35e" class="ex" style="letter-spacing:-0.527px">.scss</span></div>
<div class="hd2" style="left:22px;top:916px"></div>
<div class="ti" style="left:29px;top:907px"><svg viewBox="0 0 16 16" width="16" height="16"><path d="M5 1.5C3.6 1.5 3.2 2.2 3.2 3.4V6C3.2 7.2 2.6 7.8 1.6 8C2.6 8.2 3.2 8.8 3.2 10V12.6C3.2 13.8 3.6 14.5 5 14.5M11 1.5C12.4 1.5 12.8 2.2 12.8 3.4V6C12.8 7.2 13.4 7.8 14.4 8C13.4 8.2 12.8 8.8 12.8 10V12.6C12.8 13.8 12.4 14.5 11 14.5" fill="none" stroke="#f0dc38" stroke-width="1.35" stroke-linecap="round"/></svg></div>
<div class="tx fn" style="left:51px;top:905px"><span id="t36n" style="letter-spacing:-0.084px">koala-config</span><span id="t36e" class="ex" style="letter-spacing:0.002px">.json</span></div>
<div class="hd2" style="left:22px;top:940px"></div>
<div class="ti" style="left:29px;top:930.5px"><svg viewBox="0 0 16 18" width="15.5" height="17"><path d="M14.8 2.7C13.8 0.4 8.6 0.8 4.8 3.6C1.7 5.9 1 7.9 2.9 9.3C4.4 10.4 5.8 10.6 6.3 11.7C7.2 13.6 5.6 16.2 3.6 16.9C2 17.4 1.1 16.2 1.8 15C2.6 13.6 4.8 12.9 6.3 11.5C7.8 10.1 11 9.6 12.4 10.6C13.4 11.4 13.3 12.8 12.6 13.5M14.8 2.7C15.5 4.3 12.8 6.7 9.8 7.7C7.8 8.4 5.9 8.3 5 7.7" fill="none" stroke="#d0639b" stroke-width="1.15" stroke-linecap="round" stroke-linejoin="round"/></svg></div>
<div class="tx fn" style="left:51px;top:929px"><span id="t37n" style="letter-spacing:-0.072px">main</span><span id="t37e" class="ex" style="letter-spacing:-0.527px">.scss</span></div>
<div class="vd" style="left:38px;top:90px;height:34px;background-position:0 -4px"></div>
<div class="vd" style="left:38px;top:154px;height:175px;background-position:0 -2px"></div>
<div class="vd" style="left:38px;top:359px;height:175px;background-position:0 -3px"></div>
<div class="vd" style="left:38px;top:564px;height:37px;background-position:0 -4px"></div>
<div class="vd" style="left:38px;top:631px;height:14px;background-position:0 -5px"></div>
<div class="vd" style="left:38px;top:675px;height:37px;background-position:0 -1px"></div>
<div class="vd" style="left:38px;top:742px;height:152px;background-position:0 -2px"></div>
<div class="vd" style="left:18px;top:90px;height:848px"></div>
  </div>
</div>
<div id="tabs"><div class="act"></div>
<svg class="tic" style="left:8px;top:10px" width="15" height="10" viewBox="0 0 15 10"><path d="M0.8 5.2h13.4M4 2.6L1 5.2L4 7.8" fill="none" stroke="#ececec" stroke-width="1.35"/></svg>
<div style="position:absolute;left:35px;top:5.5px;font-size:7px;font-style:italic;font-weight:bold;color:#8a8ec0;letter-spacing:-.2px;line-height:12px">php</div>
<svg class="tic" style="left:195px;top:5.5px" width="11.5" height="13" viewBox="0 0 16 18"><path d="M14.8 2.7C13.8 0.4 8.6 0.8 4.8 3.6C1.7 5.9 1 7.9 2.9 9.3C4.4 10.4 5.8 10.6 6.3 11.7C7.2 13.6 5.6 16.2 3.6 16.9C2 17.4 1.1 16.2 1.8 15C2.6 13.6 4.8 12.9 6.3 11.5C7.8 10.1 11 9.6 12.4 10.6C13.4 11.4 13.3 12.8 12.6 13.5M14.8 2.7C15.5 4.3 12.8 6.7 9.8 7.7C7.8 8.4 5.9 8.3 5 7.7" fill="none" stroke="#d0639b" stroke-width="1.35" stroke-linecap="round" stroke-linejoin="round"/></svg>
<svg class="tic" style="left:343px;top:5.5px" width="11.5" height="13" viewBox="0 0 16 18"><path d="M14.8 2.7C13.8 0.4 8.6 0.8 4.8 3.6C1.7 5.9 1 7.9 2.9 9.3C4.4 10.4 5.8 10.6 6.3 11.7C7.2 13.6 5.6 16.2 3.6 16.9C2 17.4 1.1 16.2 1.8 15C2.6 13.6 4.8 12.9 6.3 11.5C7.8 10.1 11 9.6 12.4 10.6C13.4 11.4 13.3 12.8 12.6 13.5M14.8 2.7C15.5 4.3 12.8 6.7 9.8 7.7C7.8 8.4 5.9 8.3 5 7.7" fill="none" stroke="#d0639b" stroke-width="1.35" stroke-linecap="round" stroke-linejoin="round"/></svg>
<svg class="tic" style="left:1535px;top:12px" width="10" height="6" viewBox="0 0 10 6"><path d="M0 .6h9.4M0 2.8h9.4M0 5h9.4" stroke="#d8d8d8" stroke-width=".85"/></svg>

<div id="tb0" class="tb a" style="left:48.5px;letter-spacing:-0.199px">archive-biblioteca.php</div>
<div class="tb" style="left:208.2px"><span id="tb1n" style="letter-spacing:-0.294px">_media-queries</span><span id="tb1e" class="ex" style="letter-spacing:-0.707px">.scss</span></div>
<div class="tb" style="left:355.9px"><span id="tb2n" style="letter-spacing:-0.255px">_plugins</span><span id="tb2e" class="ex" style="letter-spacing:-0.647px">.scss</span></div>
</div>
<div id="ed"><div id="code">
<div class="ln" style="top:97px"><span class="no">1</span><span class="cd">&lt;?php get_template_part(<i class="s">'/template-parts/doc-type'</i>); ?&gt;</span></div>
<div class="ln" style="top:115px"><span class="no">2</span><b class="f"></b><span class="cd"><i class="t">&lt;div</i> <i class="a">id</i>=<i class="s">"grid-one-col"</i><i class="t">&gt;</i></span></div>
<div class="ln" style="top:133px"><span class="no">3</span><span class="cd">    <i class="c">&lt;!-- /open grid wrapper --&gt;</i></span></div>
<div class="ln" style="top:151px"><span class="no">4</span><span class="cd">    &lt;?php get_header(); ?&gt;</span></div>
<div class="ln" style="top:169px"><span class="no">5</span><span class="cd">    <i class="t">&lt;section</i> <i class="a">class</i>=<i class="s">"page-title"</i><i class="t">&gt;</i><i class="t">&lt;h1&gt;</i>&lt;?php _e( <i class="s">'Biblioteca'</i>, <i class="s">'pajarita'</i> ); ?&gt;<i class="t">&lt;/h1&gt;</i><i class="t">&lt;/section&gt;</i></span></div>
<div class="ln" style="top:187px"><span class="no">6</span><b class="f"></b><span class="cd">    <i class="t">&lt;main</i> <i class="a">id</i>=<i class="s">"main-container"</i><i class="t">&gt;</i></span></div>
<div class="ln" style="top:205px"><span class="no">7</span><span class="cd">        &lt;?php <i class="k">if</i> ( function_exists(<i class="s">'yoast_breadcrumb'</i>) ) { yoast_breadcrumb(<i class="s">'&lt;p id="breadcrumbs"&gt;'</i>,<i class="s">'&lt;/p&gt;'</i>); } ?&gt;</span></div>
<div class="ln" style="top:223px"><span class="no">8</span><span class="cd">        &lt;?php <i class="k">if</i>(!function_exists(<i class="s">'dynamic_sidebar'</i>) || !dynamic_sidebar(<i class="s">'Area Biblioteca'</i>)) ?&gt;</span></div>
<div class="ln" style="top:241px"><span class="no">9</span><span class="cd"></span></div>
<div class="ln" style="top:259px"><span class="no">10</span><b class="f"></b><span class="cd">            <i class="t">&lt;section</i> <i class="a">class</i>=<i class="s">"post-grid animate fadeIn one"</i><i class="t">&gt;</i></span></div>
<div class="ln" style="top:277px"><span class="no">11</span><span class="cd">            &lt;?php query_posts(<i class="k">array</i>(</span></div>
<div class="ln" style="top:295px"><span class="no">12</span><span class="cd">            <i class="s">'post_type'</i> =&gt; <i class="s">'biblioteca'</i>,</span></div>
<div class="ln" style="top:313px"><span class="no">13</span><span class="cd">            <i class="s">'has_archive'</i> =&gt; <i class="s">true</i>,</span></div>
<div class="ln" style="top:331px"><span class="no">14</span><span class="cd">            <i class="s">'orderby'</i>=&gt; <i class="s">'ASC'</i>,</span></div>
<div class="ln" style="top:349px"><span class="no">15</span><span class="cd">            <i class="s">'paged'</i>=&gt;$paged, )); ?&gt;</span></div>
<div class="ln" style="top:367px"><span class="no">16</span><span class="cd"></span></div>
<div class="ln" style="top:385px"><span class="no">17</span><span class="cd">            &lt;?php <i class="k">if</i> ( have_posts() ) : <i class="k">while</i> ( have_posts() ) : the_post(); ?&gt;</span></div>
<div class="ln" style="top:403px"><span class="no">18</span><b class="f"></b><span class="cd">            <i class="t">&lt;div</i> <i class="a">class</i>=<i class="s">"post-col col-3"</i><i class="t">&gt;</i>  <i class="c">&lt;!-- /change between col or full on main.scss --&gt;</i></span></div>
<div class="ln" style="top:421px"><span class="no">19</span><b class="f"></b><span class="cd">                <i class="t">&lt;div</i> <i class="a">class</i>=<i class="s">"grid-item"</i> <i class="a">id</i>=<i class="s">"</i>&lt;?php</span></div>
<div class="ln" style="top:439px"><span class="no">20</span><span class="cd">                    $terms = get_the_terms( $post-&gt;ID, <i class="s">'diagrama-tipo'</i> );</span></div>
<div class="ln" style="top:457px"><span class="no">21</span><b class="f"></b><span class="cd">                    <i class="k">if</i> ( !<i class="k">empty</i>( $terms ) )<i class="m">{</i></span><b class="cur" style="left:467px"></b></div>
<div class="ln" style="top:475px"><span class="no">22</span><span class="cd">                        $term = <i class="k">array_shift</i>( $terms );</span></div>
<div class="ln" style="top:493px"><span class="no">23</span><span class="cd">                        <i class="k">echo</i> $term-&gt;slug;<i class="m">}</i> ?&gt;<i class="s">"</i><i class="t">&gt;</i></span></div>
<div class="ln" style="top:511px"><span class="no">24</span><span class="cd"></span></div>
<div class="ln" style="top:529px"><span class="no">25</span><span class="cd">                    <i class="t">&lt;figure&gt;</i>&lt;?php the_post_thumbnail(<i class="s">'thumbnail'</i>); ?&gt;<i class="t">&lt;/figure&gt;</i></span></div>
<div class="ln" style="top:547px"><span class="no">26</span><b class="f"></b><span class="cd">                    <i class="t">&lt;div</i> <i class="a">class</i>=<i class="s">"grid-item-content"</i><i class="t">&gt;</i></span></div>
<div class="ln" style="top:565px"><span class="no">27</span><span class="cd">                        <i class="t">&lt;h5&gt;</i>&lt;?php the_title(); ?&gt;<i class="t">&lt;/h5&gt;</i></span></div>
<div class="ln" style="top:583px"><span class="no">28</span><span class="cd">                        <i class="t">&lt;p</i> <i class="a">class</i>=<i class="s">"info-libro autor"</i><i class="t">&gt;</i>&lt;?php <i class="k">echo</i> do_shortcode(<i class="s">'[types field="autor-del-libro"][/types]'</i>); ?&gt;<i class="t">&lt;/p&gt;</i></span></div>
<div class="ln" style="top:601px"><span class="no">29</span><span class="cd">                        <i class="t">&lt;p</i> <i class="a">class</i>=<i class="s">"info-libro"</i><i class="t">&gt;</i><i class="t">&lt;strong&gt;</i>Editorial: <i class="t">&lt;/strong&gt;</i>&lt;?php <i class="k">echo</i> do_shortcode(<i class="s">'[types field="editorial"][/types]'</i>); ?&gt;<i class="t">&lt;/p&gt;</i></span></div>
<div class="ln" style="top:619px"><span class="no">30</span><span class="cd">                        <i class="t">&lt;p</i> <i class="a">class</i>=<i class="s">"info-libro"</i><i class="t">&gt;</i><i class="t">&lt;strong&gt;</i>Año de la edición: <i class="t">&lt;/strong&gt;</i>&lt;?php <i class="k">echo</i> do_shortcode(<i class="s">'[types field="ano-de-la-edicion"][/types]'</i>); ?&gt;<i class="t">&lt;/p&gt;</i></span></div>
<div class="ln" style="top:637px"><span class="no">31</span><span class="cd">                        <i class="t">&lt;p</i> <i class="a">class</i>=<i class="s">"info-libro"</i><i class="t">&gt;</i><i class="t">&lt;strong&gt;</i>ISBN: <i class="t">&lt;/strong&gt;</i>&lt;?php <i class="k">echo</i> do_shortcode(<i class="s">'[types field="isbn"][/types]'</i>); ?&gt;<i class="t">&lt;/p&gt;</i></span></div>
<div class="ln" style="top:655px"><span class="no">32</span><span class="cd">                        <i class="t">&lt;p</i> <i class="a">class</i>=<i class="s">"info-libro"</i><i class="t">&gt;</i><i class="t">&lt;strong&gt;</i>Número de páginas: <i class="t">&lt;/strong&gt;</i>&lt;?php <i class="k">echo</i> do_shortcode(<i class="s">'[types field="numero-de-paginas"][/types]'</i>); ?&gt;<i class="t">&lt;/p&gt;</i></span></div>
<div class="ln" style="top:673px"><span class="no">33</span><span class="cd">                        <i class="t">&lt;p</i> <i class="a">class</i>=<i class="s">"info-libro"</i><i class="t">&gt;</i><i class="t">&lt;strong&gt;</i>Soporte: <i class="t">&lt;/strong&gt;</i>&lt;?php <i class="k">echo</i> do_shortcode(<i class="s">'[types field="soporte"][/types]'</i>); ?&gt;<i class="t">&lt;/p&gt;</i></span></div>
<div class="ln" style="top:691px"><span class="no">34</span><span class="cd">                        &lt;?php <i class="k">echo</i> do_shortcode(<i class="s">'[types field="seleccionar"][/types]'</i>); ?&gt;</span></div>
<div class="ln" style="top:709px"><span class="no">35</span><span class="cd"></span></div>
<div class="ln" style="top:727px"><span class="no">36</span><span class="cd">                        &lt;?php <i class="k">if</i> ( is_user_logged_in() ) { ?&gt;</span></div>
<div class="ln" style="top:745px"><span class="no">37</span><span class="cd">                        &lt;?php } <i class="k">else</i> { ?&gt;</span></div>
<div class="ln" style="top:763px"><span class="no">38</span><span class="cd">                        &lt;?php } ?&gt;</span></div>
<div class="ln" style="top:781px"><span class="no">39</span><span class="cd"></span></div>
<div class="ln" style="top:799px"><span class="no">40</span><span class="cd">                    <i class="t">&lt;/div&gt;</i></span></div>
<div class="ln" style="top:817px"><span class="no">41</span><span class="cd">                <i class="t">&lt;/div&gt;</i></span></div>
<div class="ln" style="top:835px"><span class="no">42</span><span class="cd">            <i class="t">&lt;/div&gt;</i></span></div>
<div class="ln" style="top:853px"><span class="no">43</span><span class="cd"></span></div>
<div class="ln" style="top:871px"><span class="no">44</span><span class="cd">            &lt;?php <i class="k">endwhile</i>; <i class="k">else</i>: ?&gt;</span></div>
<div class="ln" style="top:889px"><span class="no">45</span><span class="cd">                <i class="t">&lt;p</i> <i class="a">class</i>=<i class="s">"no-post-msj"</i><i class="t">&gt;</i>&lt;?php _e(<i class="s">'Lo sentimos, ninguna entrada coincide con tus criterios de búsqueda. Utilize el menú de la parte superior para</i></span></div>
<div class="ln" style="top:907px"><span class="cd">                <i class="s">navegar por nuestra web.'</i>, <i class="s">'pajarita'</i> ); ?&gt;<i class="t">&lt;/p&gt;</i></span></div>
<div class="ln" style="top:925px"><span class="no">46</span><span class="cd">            &lt;?php <i class="k">endif</i>; ?&gt;</span></div>
</div></div>
<div id="sbar"></div>
<div id="tool">
<svg style="position:absolute;left:0;top:0" width="30" height="300" viewBox="1890 49 30 300">
<g fill="#bdbdbd">
<path d="M1894.3 81L1902.6 71.3L1908.2 75.6L1916.2 69.8L1908 80.4L1902.6 76.2Z"/>
<circle cx="1904.8" cy="137" r="9"/>
<path d="M1904.8 190L1907.1 196.6L1914.8 196.9L1908.7 201.5L1910.9 208.5L1904.8 204.3L1898.7 208.5L1900.9 201.5L1894.8 196.9L1902.5 196.6Z"/>
<path d="M1896 222.2H1901.6V226.8L1907.4 222.2H1914V237.6H1896Z"/>
<rect x="1896" y="283.6" width="18" height="16.8" rx="2"/>
</g>
<g fill="#8fd13f"><rect x="1896.2" y="103.4" width="17.8" height="9.4" rx="1"/><rect x="1898.6" y="101" width="4.4" height="4" rx="1.6"/><rect x="1906.2" y="101" width="4.4" height="4" rx="1.6"/><circle cx="1914.2" cy="100.2" r="2"/></g>
<path d="M1899.6 137.4L1903.4 141.2L1910.6 132.6" fill="none" stroke="#5d5f60" stroke-width="2.2"/>
<g fill="none" stroke="#bdbdbd" stroke-width="3"><path d="M1897.6 167.5C1898.6 163.6 1902.6 162 1908 162.6"/><path d="M1912.8 169C1911.6 172.8 1907.6 174.6 1902 174"/></g>
<path d="M1906.6 158.6L1913.4 162.8L1906.6 167.4Z" fill="#bdbdbd"/><path d="M1903.6 169.4L1896.8 173.8L1903.6 178.2Z" fill="#bdbdbd"/>
<g stroke="#bdbdbd" fill="none"><path d="M1903.2 258.6L1913.2 268.6" stroke-width="2.8" stroke-linecap="round"/><path d="M1900.8 250.8V254M1900.8 258.6V261.8M1895.6 256.3H1898.6M1903 256.3H1906M1897.2 252.6L1899 254.4M1904.4 252.6L1902.6 254.4M1897.2 260L1899 258.2" stroke-width="1.1"/></g>
<path d="M1901.8 288.2L1898 292L1901.8 295.8M1908.2 288.2L1912 292L1908.2 295.8M1906.4 287L1903.6 297" fill="none" stroke="#55585a" stroke-width="1.7"/>
<path d="M1901 329.8H1897V316H1913V329.8H1909" fill="none" stroke="#bdbdbd" stroke-width="2"/><path d="M1896 315H1914V318.6H1896Z" fill="#bdbdbd"/><path d="M1905 330.8V323.5M1901.4 326L1905 322.2L1908.6 326" fill="none" stroke="#bdbdbd" stroke-width="1.8"/>
</svg>

</div>
</body></html>
